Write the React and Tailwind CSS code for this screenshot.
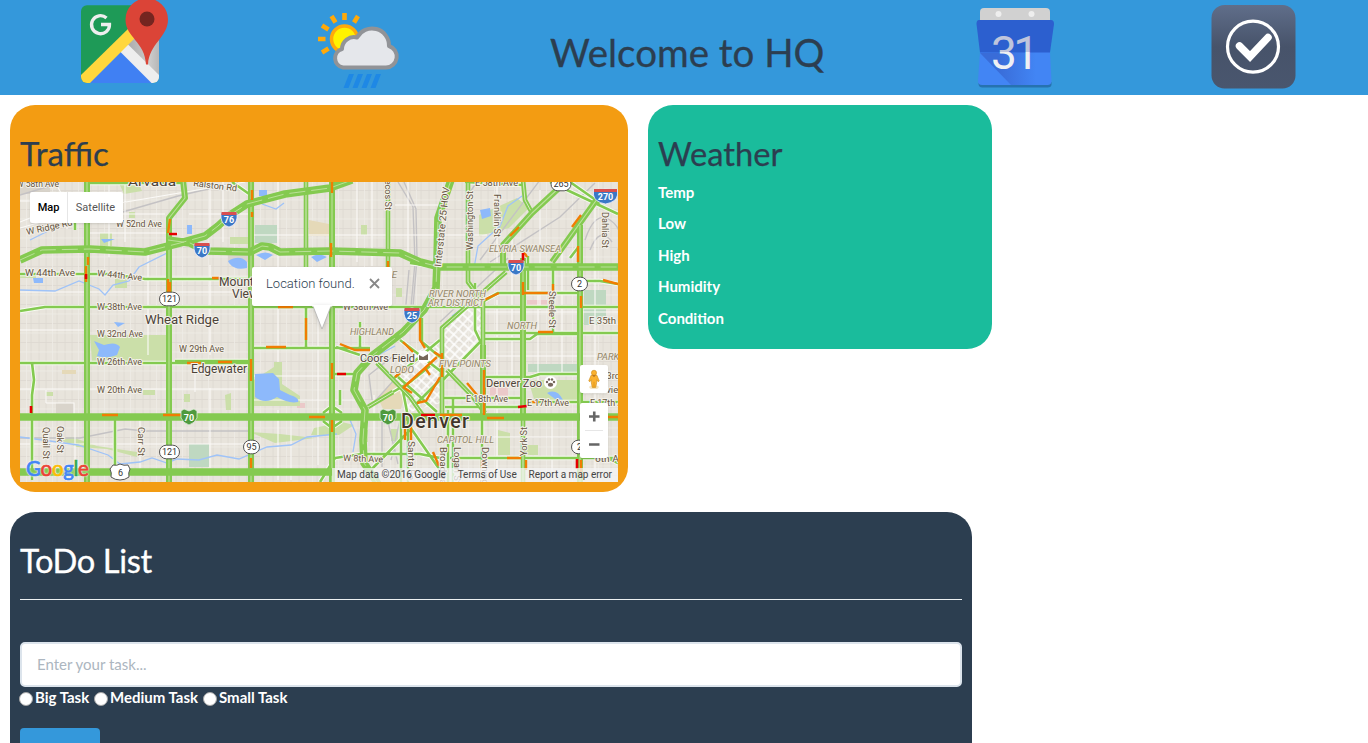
import React from "react";

const parks = [
  ["M118 181h20l4 10-18 3zM129 212h6v6h-6zM20 272h16v6h-16zM100 233h12v13h-12zM90 335h78v26H92zM252 381l22-14v-5h8v22l18 12v10h-46zM115 278h12v10h-12zM46 392h7v4h-7zM143 390h12v5h-12zM60 440l12-3 25 9 40 6v5l-30-8-30-2zM184 394h6v8h-6zM230 237h18v7h-18z"],
  ["M479 215l38-17 12 10-20 20-30 8zM528 380h53v20l-45 5zM498 430l12 3v22h-12zM361 225h6v10h-6zM396 288h6v9h-6zM225 395l6-2v17h-5zM360 430h8v12h-8zM314 428l28-6 12 3-15 10h-28zM250 432l30 2 35 4-40 5zM391 429h7v12h-7zM523 445h15v10h-15z"],
];
const greens = [
  "M255 225h22v18h-22zM189 444h20v23h-20zM528 364h49v8h-49zM584 290h22v28l-9 7h-13z",
];
const lakes = [
  "M228 261q12-7 19 1v6q-12 3-18-5zM256 255q10-5 17 0l-8 5zM311 257q8-5 16 0l-10 5zM255 374l18-1 6 6 1 11 10 5q10 3 8 7-9 2-21-5-12 8-22 0zM94 341l10 4q12-4 16 2l-3 8q-10 4-20 1l2-6zM547 393q10-5 16 7l-8-1zM101 239h14l-11 4zM259 190h8v6h-8zM114 322l11 1-7 4zM33 278h10v5h-9zM187 225h5v9h-5zM480 210l10-2 1 8-9 3z",
];
const streams =
  "M20 290l35 1 24-10 20 8 6 6 8-10 16-4 10-14 28-14M20 437l30 4 28 4 30 10 12 9 20-2 12-4 15 5 10-4 22 1 18-5 22 4 28-12 24-2 16-8 30-3M474 268l4-22 22-20 8-20 14-10M452 316l14-10 8-12M361 372l12-14 22-12M262 204l14 5 8-6M30 240l20-10M350 420l6 14-3 18";

const minor = [
  "M20 228L90 208 245 182M20 222l35-14M55 182l12 22v25M109 182v75M125 182v60M210 182v45M20 201h60M95 214h70M88 233h90M189 214h62M252 235h235M357 182v80M372 182v84M278 182v180M210 265v90M223 182v60M148 255v100M20 292h230M20 330h70M20 389h230M46 390v13M46 403h28v14M195 362v30M210 388v80M252 376h110M252 400h110M278 410v70M291 420v60M318 300v165M374 395v75M20 444h230M75 417v60M140 420v50M408 182v70M395 205h45M497 182v80M512 230v150M540 190v120M562 245v130M595 200v220M480 312h138M484 356h134M538 270v110M497 300v130M484 437h134M497 420v60M552 417v65M595 420v60",
];
const rails =
  "M398 182l15 25 2 55-4 45M404 182l12 27 1 50-4 48M409 270l-4 45M480 260l60-80M490 262l70-45 35-34M440 322l68-64M20 195l40-12M88 222l90-26 60-14M20 438h60l45-9 20 2h106M372 400l-3-25 28-22M376 400l18-20 25-20M585 240q10-30 25-20t8 30M590 250q10-25 22-8M470 200q0-18 14-17M382 422v45M388 422l10 42M400 420l-9 40";

const freeway = [
  "M20 260L42 250 90 249 145 252 180 243 205 236 218 226 230 215 247 204 285 194 330 188 352 180",
  "M168 240L190 243 206 251 250 252 262 246 270 247 280 252 330 251 400 253 420 262 440 267 618 267",
  "M451 180L438 218 437 262 436 288 424 310 403 332 373 355 357 373 354 390 365 410 363 440 364 463 378 484",
  "M20 417H618",
  "M20 472H335",
];
const arterial = [
  "M87 182V482", "M183 180L185 198 169 218V482", "M251 182V482", "M332 182V482",
  "M580 225V482", "M523 258V417", "M483 345V417",
  "M560 187L532 213 503 245V266", "M600 195L552 262",
];
const narrow = [
  "M306 182V270", "M388 182V268", "M523 417V482", "M483 300V345",
  "M523 180L525 200 532 213", "M506 272L442 328V415", "M468 183V282L483 302",
  "M377 363L410 397 424 417", "M447 370L473 397 485 413", "M368 407L393 392",
];
const streets = [
  "M20 274H110L145 279H252", "M20 311L45 307H332", "M332 307H618", "M20 363H252", "M175 361H250",
  "M252 348H370", "M32 363L34 380 32 395V480", "M115 420V475", "M306 348V308", "M410 258L438 267 410 263",
  "M482 333H618", "M482 339H530L537 334H580", "M486 377H530L540 374H580", "M443 398H520", "M445 407H520",
  "M527 402H618", "M450 458H618", "M443 380L482 340", "M410 427L440 470",
  "M453 398V482", "M448 410V482", "M482 420V482", "M553 267V335", "M482 302L498 293H580", "M528 256V290",
  "M400 340L443 373", "M398 377L437 412", "M393 379L440 340", "M416 404L442 378", "M402 386L408 417",
  "M393 392L410 382 430 366", "M356 374H332", "M336 347L360 355", "M360 322V350", "M422 318V342L440 357",
  "M401 420V482M408 418V482", "M320 482L335 458 362 454H420L440 458",
  "M580 281H600L618 284", "M580 445L618 463", "M550 182L618 214", "M570 182L600 203",
  "M183 183H88V190L75 213V230", "M465 182L523 185", "M232 182L252 196", "M340 390V405M323 413L332 406 342 413M323 421L332 428 342 421",
  "M475 283V330L482 345M570 258L580 245", "M410 430L370 471 378 477",
];
const slow =
  "M88 257v8M86 266v16M170 219l-2 14M168 279v16M170 282v10M252 190v10M252 212v5M332 181v12M331 243v14M388 261v8M306 318v22M266 347h20M251 359v22M332 363v16M332 420v12M251 458v10M309 417h16M102 415h16M163 415h20M187 363h14M218 362h14M212 278h10M278 307h15M523 282v13M524 293h28M484 300l15-7M519 227l-9 9M581 215l-9 12M578 246v16M581 296v12M603 280l15 4M553 284v10M340 344l15 6h15M403 342l10 10M420 318v22l5 8M395 377l12-10M403 387l9 6M417 403l9-2 14-24M403 388l34-31M425 368l5 7M434 352l8 5M442 353v24M467 383l10 12M484 370v45M440 415h22M487 418h17M538 332h15M507 458h14M482 460v18M433 452l6 14M405 418v22M411 418v22M526 460v10M581 460v18M527 402h12M595 417h23M527 257l-3-5";
const jam = "M169 234h8M86 274v5M31 406v7M337 374h9M523 253v8M421 415h14M518 407l9-1M577 459v10";

const labels = [
  ["W 58th Ave", 16, 187, 43, 9],
  ["Arvada", 128, 185.5, 48, 13, 0, "city"],
  ["Ralston Rd", 193, 186, 44, 9, 7],
  ["W Ridge Rd", 27, 235, 47, 9, -12],
  ["W 52nd Ave", 116, 227, 46, 9],
  ["W 44th Ave", 25, 276, 50, 9.5],
  ["W 44th Ave", 97, 276, 45, 9, 6],
  ["W 38th Ave", 97, 310, 45, 9],
  ["Wheat Ridge", 145, 323.5, 74, 12, 0, "city"],
  ["W 32nd Ave", 97, 337, 46, 9],
  ["W 29th Ave", 179, 352, 45, 9],
  ["W 26th Ave", 97, 365, 45, 9],
  ["W 20th Ave", 97, 393, 45, 9],
  ["Edgewater", 191, 372.5, 56, 12, 0, "city"],
  ["Mountain", 219, 285.5, 51, 12, 0, "city"],
  ["View", 232, 297.5, 26, 12, 0, "city"],
  ["Quail St", 43, 427, 32, 9, 90],
  ["Oak St", 57, 426, 27, 9, 90],
  ["Carr St", 138, 427, 29, 9, 90],
  ["W 38th Ave", 343, 310, 45, 9],
  ["W 8th Ave", 343, 461, 40, 9, 2],
  ["Pecos St", 385, 174, 36, 9, 90],
  ["Interstate 25 HOV", 441, 267, 80, 9.5, -84],
  ["Washington St", 473, 250, 59, 9, -90],
  ["Franklin St", 494, 194, 43, 9, 90],
  ["E 58th Ave", 475, 186, 43, 9],
  ["Dahlia St", 602, 212, 36, 9, 90],
  ["Steele St", 549, 291, 37, 9, 90],
  ["E 35th Ave", 589, 324, 45, 9],
  ["E 18th Ave", 466, 402, 42, 9],
  ["E 17th Ave", 527, 406, 42, 9],
  ["E 17th Ave", 590, 406, 42, 9],
  ["E 23rd Ave", 594, 379, 43, 9],
  ["Montview Blvd", 584, 393, 62, 9],
  ["6th Ave", 595, 462, 34, 9],
  ["York St", 527, 456, 29, 9, -90],
  ["Santa Fe", 408, 441, 39, 9, 90],
  ["Broadway", 440, 447, 42, 9, 90],
  ["Logan St", 454, 447, 37, 9, 90],
  ["Downing St", 482, 447, 49, 9, 90],
  ["SUNNYSIDE", 347, 278, 50, 9, 0, "area"],
  ["ELYRIA SWANSEA", 489, 252, 72, 9, 0, "area"],
  ["RIVER NORTH", 429, 297, 57, 9, 0, "area"],
  ["ART DISTRICT", 428, 306, 56, 9, 0, "area"],
  ["HIGHLAND", 350, 335, 44, 9, 0, "area"],
  ["NORTH", 507, 329, 30, 9, 0, "area"],
  ["PARK HILL", 597, 360, 43, 9, 0, "area"],
  ["FIVE POINTS", 439, 367, 52, 9, 0, "area"],
  ["LODO", 390, 373, 24, 9, 0, "area"],
  ["CAPITOL HILL", 437, 443, 57, 9, 0, "area"],
  ["Coors Field", 360, 361.5, 55, 10.5, 0, "poi"],
  ["Denver Zoo", 486, 386.5, 56, 10.5, 0, "poi"],
  ["Denver", 401, 428, 68, 19.5, 0, "capital"],
];

const labelTone = {
  road: "fill-[#65543e] stroke-[#f4f1ea]",
  city: "fill-[#4c4239] stroke-[#f4f1ea]",
  poi: "fill-[#51453a] stroke-[#f4f1ea]",
  area: "fill-[#948668] stroke-[#eeeae2] italic",
  capital: "fill-[#40352b] stroke-[#f4f1ea] font-medium",
};

function Label({ item }) {
  const [text, x, y, width, size, angle = 0, tone = "road"] = item;
  return (
    <text
      x={x}
      y={y}
      fontSize={size}
      textLength={width}
      lengthAdjust={tone === "capital" ? "spacing" : "spacingAndGlyphs"}
      transform={angle ? `rotate(${angle} ${x} ${y})` : undefined}
      strokeWidth="2"
      strokeLinejoin="round"
      paintOrder="stroke"
      className={labelTone[tone]}
    >
      {text}
    </text>
  );
}

function Interstate({ x, y, n, wide }) {
  const w = wide ? 12 : 8;
  return (
    <g transform={`translate(${x} ${y})`}>
      <path d={`M${-w} -6Q${-w / 2} -6 0 -7Q${w / 2} -6 ${w} -6V-1Q${w - 1} 6 0 8Q${1 - w} 6 ${-w} -1z`} fill="#3a78c6" stroke="#eef" strokeWidth=".8" />
      <path d={`M${-w + 0.5} -7H${w - 0.5}V-4H${-w + 0.5}z`} fill="#d94f4f" />
      <text y="4" textAnchor="middle" fontSize="9" fontWeight="700" fill="#fff">{n}</text>
    </g>
  );
}

function BusinessLoop({ x, y }) {
  return (
    <g transform={`translate(${x} ${y})`}>
      <path d="M-8 -6L-5 -8 0 -6 5 -8 8 -6V1Q6 6 0 8Q-6 6 -8 1z" fill="#4f9a3e" stroke="#dfeeda" strokeWidth=".8" />
      <text y="4" textAnchor="middle" fontSize="9" fontWeight="700" fill="#fff">70</text>
    </g>
  );
}

function StateRoute({ x, y, n }) {
  const w = n.length > 2 ? 10 : 8;
  return (
    <g transform={`translate(${x} ${y})`}>
      <rect x={-w} y="-6.8" width={w * 2} height="13.6" rx="6.8" fill="#fff" stroke="#555" />
      <text y="3.3" textAnchor="middle" fontSize="9" fill="#333">{n}</text>
    </g>
  );
}

function TrafficMap() {
  return (
    <svg viewBox="20 182 598 300" className="block h-[300px] w-[598px] font-[Roboto,sans-serif]" fill="none">
      <defs>
        <pattern id="blocks" width="26" height="19" patternUnits="userSpaceOnUse">
          <path d="M0 .5H26M5 0V19M13 0V19M20 0V19" stroke="#ddd8d0" strokeWidth=".8" />
          <path d="M0 10H26M.5 0V19" stroke="#efece6" strokeWidth=".8" />
        </pattern>
        <pattern id="downtown" width="7" height="7" patternUnits="userSpaceOnUse" patternTransform="rotate(42)">
          <path d="M0 1H7M1 0V7" stroke="#fff" strokeWidth="1.4" />
        </pattern>
      </defs>
      <rect x="20" y="182" width="598" height="300" fill="#e8e4dc" />
      <rect x="20" y="182" width="598" height="300" fill="url(#blocks)" />
      <path d="M309 220l20 4v12h-20zM378 398l15-18 12 14-4 15h-18zM62 370h14v4h-14z" fill="#e5d9b8" />
      <path d="M527 300h20v8h-20zM490 387h18v10h-18zM297 403h8v5h-8z" fill="#ebc9c9" />
      <path d="M56 403h18v10h-18zM20 182h30v12h-30zM228 252h24v10h-24z" fill="#d9d4cb" />
      <path d={parks.flat().join("")} fill="#cbdfa9" />
      <path d={greens.join("")} fill="#bfd8c1" />
      <path d="M440 330L484 290 484 340 440 385zM400 360L440 340 444 402 410 412 396 385z" fill="url(#downtown)" />
      <path d={rails} stroke="#c4c2c4" strokeWidth="1.4" />
      <path d={minor.join("")} stroke="#fbfaf7" strokeWidth="1.1" />
      <path d={streams} stroke="#9fc3f8" strokeWidth="1.3" />
      <path d={lakes.join("")} fill="#8db9fb" />
      <g strokeLinejoin="round">
        <path d={streets.join("")} stroke="#f7fbf1" strokeWidth="4.4" />
        <path d={streets.join("")} stroke="#84ca50" strokeWidth="2.6" />
        <path d={narrow.join("")} stroke="#84ca50" strokeWidth="4.6" />
        <path d={narrow.join("")} stroke="#d6ebc0" strokeWidth="1" />
        <path d={arterial.join("")} stroke="#84ca50" strokeWidth="6" />
        <path d={arterial.join("")} stroke="#bde09b" strokeWidth="1.1" />
        <path d={freeway.join("")} stroke="#84ca50" strokeWidth="7.6" />
        <path d={freeway.slice(0, 3).join("")} stroke="#c8e5a9" strokeWidth=".8" strokeDasharray="16 6" />
      </g>
      <path d={slow} stroke="#f07d02" strokeWidth="2.4" />
      <path d={jam} stroke="#e60000" strokeWidth="2.6" />
      {labels.map((item, i) => <Label key={i} item={item} />)}
      <Interstate x={202} y={250} n="70" />
      <Interstate x={229} y={219} n="76" />
      <Interstate x={516} y={267} n="70" />
      <Interstate x={412} y={315} n="25" />
      <Interstate x={605.5} y={196} n="270" wide />
      <BusinessLoop x={189} y={417} />
      <BusinessLoop x={388} y={417} />
      <StateRoute x={169.5} y={299} n="121" />
      <StateRoute x={169.5} y={452} n="121" />
      <StateRoute x={251.5} y={447} n="95" />
      <StateRoute x={579.5} y={284} n="2" />
      <StateRoute x={579.5} y={447} n="2" />
      <StateRoute x={561} y={184} n="265" />
      <path d="M113 465q4 1 7-1 4 2 8 1l2 4q-2 4-1 8-4 3-9 3-5 0-9-3 1-4-1-8z" fill="#fff" stroke="#555" />
      <text x="120.5" y="476" textAnchor="middle" fontSize="9" fill="#333">6</text>
      <circle cx="424" cy="357" r="6.5" fill="#fff" />
      <path d="M419 355l4 2 5-3v6h-9z" fill="#77685c" />
      <circle cx="550.5" cy="382.5" r="6.5" fill="#fff" />
      <g fill="#77685c">
        <circle cx="547" cy="382" r="1.2" /><circle cx="549" cy="379.5" r="1.2" />
        <circle cx="552" cy="379.5" r="1.2" /><circle cx="554" cy="382" r="1.2" />
        <ellipse cx="550.5" cy="384.7" rx="2.7" ry="2" />
      </g>
    </svg>
  );
}

function MapControls() {
  return (
    <>
      <div className="absolute left-[10px] top-[10px] flex h-[31px] w-[93px] rounded-[2px] bg-white text-[11px] leading-[31px] shadow-sm">
        <span className="w-[38px] border-r border-[#e6e6e6] text-center font-medium text-black">Map</span>
        <span className="flex-1 text-center text-[#565656]">Satellite</span>
      </div>
      <div className="absolute left-[232px] top-[85px] flex h-[39px] w-[140px] items-center justify-between rounded-[2px] bg-white pb-[6px] pl-[14px] pr-[12px] shadow">
        <span className="text-[13px] font-light text-[#2c3e50]">Location found.</span>
        <svg viewBox="0 0 12 12" className="h-3 w-3"><path d="M2 1L11 10M11 1L2 10" stroke="#888" strokeWidth="1.8" /></svg>
      </div>
      <svg viewBox="0 0 20 25" className="absolute left-[292px] top-[123px] h-[25px] w-5 drop-shadow-sm">
        <path d="M1 1L10 24 19 1" fill="#fff" stroke="#aaa" strokeWidth=".7" /><path d="M0 0H20V1.5H0z" fill="#fff" />
      </svg>
      <div className="absolute left-[560px] top-[183px] flex h-7 w-7 items-center justify-center rounded-[2px] bg-white shadow-sm">
        <svg viewBox="0 0 14 22" className="h-[21px] w-[14px]">
          <ellipse cx="7" cy="19" rx="5" ry="2" fill="#f4e4bd" />
          <path d="M4 6.500h6l2.500 6-1.200.8-1.500-2v3l-1 5H5.200l-1-5v-3l-1.500 2-1.200-.8z" fill="#fbb12f" stroke="#c98514" strokeWidth=".6" />
          <circle cx="7" cy="4" r="2.700" fill="#fbb12f" stroke="#c98514" strokeWidth=".6" />
          <path d="M5 6.500l2 2 2-2z" fill="#b46d1b" /><path d="M7 13.500V19" stroke="#c98514" strokeWidth=".6" />
        </svg>
      </div>
      <div className="absolute left-[560px] top-[221px] flex h-[55px] w-7 flex-col items-center rounded-[2px] bg-white shadow-sm">
        <svg viewBox="0 0 28 55" className="h-[55px] w-7"><path d="M9 13.5H19.500M14.250 8.500V18.500M9 41.5H19.500" stroke="#666" strokeWidth="2.6" /><path d="M5 27.5H23" stroke="#e6e6e6" /></svg>
      </div>
      <div className="absolute bottom-0 right-0 flex h-[14px] w-[286px] items-center justify-between bg-[#f5f5f5]/75 pl-[5px] pr-[6px] text-[10px] leading-[14px] text-[#444]">
        <span>Map data ©2016 Google</span><span>Terms of Use</span><span>Report a map error</span>
      </div>
      <div className="absolute bottom-[2px] left-[6px] whitespace-nowrap font-[Lato,sans-serif] text-[20.5px] leading-[24px] tracking-[-0.3px] [-webkit-text-stroke:0.7px_currentColor] [text-shadow:0_0_2px_#fff,0_0_2px_#fff]">
        <span className="text-[#4285f4]">G</span><span className="text-[#ea4335]">o</span><span className="text-[#fbbc05]">o</span><span className="text-[#4285f4]">g</span><span className="text-[#34a853]">l</span><span className="text-[#ea4335]">e</span>
      </div>
    </>
  );
}

function MapsLogo() {
  return (
    <svg viewBox="80 0 90 86" className="h-[86px] w-[90px]">
      <defs>
        <clipPath id="tile"><rect x="81" y="5.3" width="78" height="77.7" rx="6" /></clipPath>
        <linearGradient id="fold" x1="0" x2="1"><stop stopColor="#a7a7a7" /><stop offset=".7" stopColor="#ccc" /><stop offset="1" stopColor="#b5b5b5" /></linearGradient>
      </defs>
      <g clipPath="url(#tile)">
        <path d="M81 5h79v79H81z" fill="#1e9a57" />
        <path d="M125 45l16-16 19 10v45z" fill="url(#fold)" />
        <path d="M120 50L84 86h72z" fill="#4080f3" />
        <path d="M160 76L127 43.5 119.5 51 153 84.5h7z" fill="#eee" />
        <path d="M77 79L131 26 139 34 86 87z" fill="#ffd73d" />
      </g>
      <path d="M146 64.5c-1-23-20.500-27-20.500-45A21 21 0 0 1 168 19.500C168 37 149 44 148 64.500z" fill="#db4437" />
      <circle cx="147" cy="19" r="7.500" fill="#742520" />
      <path d="M106.500 18A9 9 0 1 0 109.500 24.500H101" fill="none" stroke="#eee" strokeWidth="3.300" />
    </svg>
  );
}

function WeatherLogo() {
  return (
    <svg viewBox="316 10 84 80" className="h-[80px] w-[84px]">
      <g stroke="#ffa90a" strokeWidth="4.600">
        <path d="M344.500 13v7M331.500 16l4 6.500M358 16l-4 6.500M322 25.500l6.500 4M318 39h7.500M322 52.500l6.500-4" />
      </g>
      <circle cx="344.500" cy="39" r="13" fill="#fff200" stroke="#ffa90a" strokeWidth="3.500" />
      <path d="M343 67.500a9.500 9.500 0 0 1-1-18.500 12 12 0 0 1 15-11.500 17 17 0 0 1 32 8.500 11 11 0 0 1-3 21.500z" fill="#e5e7eb" stroke="#919397" strokeWidth="4" strokeLinejoin="round" />
      <path d="M349 74h5l-5.500 14h-5zM358 74h5l-5.500 14h-5zM367 74h5l-5.500 14h-5zM376 74h5l-5.500 14h-5z" fill="#1e88e5" />
    </svg>
  );
}

function CalendarLogo() {
  return (
    <svg viewBox="975 6 80 84" className="h-[84px] w-[80px]">
      <path d="M978.500 83l73-1v2.500q0 3-4 3h-65q-4 0-4-4z" fill="#2672b0" />
      <path d="M980 21v-9q0-4 4-4h62q4 0 4 4v9z" fill="#d1d1d1" />
      <circle cx="998.500" cy="14" r="3" fill="#eee" /><circle cx="1031.500" cy="14" r="3" fill="#eee" />
      <path d="M980 52h70l1.500 29q0 4-4 4h-65.500q-4 0-4-4z" fill="#4285f4" />
      <path d="M980 53l31 32h30l9-33z" fill="url(#shade)" />
      <path d="M979 20h72q3 0 3 4l-4 28.500h-70L976.500 24q0-4 2.500-4z" fill="#2c5fcf" />
      <g className="font-[Roboto,sans-serif]" fontSize="46" fontWeight="400">
        <text x="991" y="69" textLength="48" fill="url(#dateTone)">31</text>
      </g>
      <defs>
        <linearGradient id="shade"><stop offset=".25" stopColor="#396cd8" /><stop offset=".8" stopColor="#4285f4" /></linearGradient>
        <linearGradient id="dateTone" gradientUnits="userSpaceOnUse" x1="0" y1="6" x2="0" y2="90"><stop offset=".55" stopColor="#bfc5dc" /><stop offset=".55" stopColor="#eef0f3" /></linearGradient>
      </defs>
    </svg>
  );
}

function TaskLogo() {
  return (
    <svg viewBox="1210 4 87 86" className="h-[86px] w-[87px]">
      <defs><linearGradient id="slate" x1="0" x2="0" y1="0" y2="1"><stop stopColor="#606e8a" /><stop offset=".5" stopColor="#47536a" /><stop offset="1" stopColor="#49566e" /></linearGradient></defs>
      <rect x="1211.500" y="5" width="84" height="83.500" rx="13" fill="url(#slate)" />
      <circle cx="1253" cy="46.700" r="25.500" fill="none" stroke="#fff" strokeWidth="3.200" />
      <path d="M1239.500 46l10.500 10.500 18-19" fill="none" stroke="#fff" strokeWidth="7.500" strokeLinecap="round" />
    </svg>
  );
}

function Header() {
  return (
    <header className="flex h-[95px] items-start bg-[#3498db] pl-[80px]">
      <MapsLogo />
      <div className="ml-[146px] mt-[10px]"><WeatherLogo /></div>
      <h1 className="ml-[150px] w-[275px] whitespace-nowrap pt-[28px] text-[38.5px] leading-[48px] [-webkit-text-stroke:0.3px_currentColor]">Welcome to HQ</h1>
      <div className="ml-[150px] mt-[6px]"><CalendarLogo /></div>
      <div className="ml-[155px] mt-[4px]"><TaskLogo /></div>
    </header>
  );
}

export default function App() {
  return (
    <div className="h-[743px] overflow-hidden bg-white font-[Lato,sans-serif] text-[#2c3e50]">
      <Header />
      <div className="flex items-start gap-5 px-[10px] pt-[10px]">
        <section className="h-[387px] w-[618px] rounded-[25px] bg-[#f39c12] px-[10px] pt-[29px]">
          <h2 className="h-[48px] text-[33px] leading-[39px] [-webkit-text-stroke:0.25px_currentColor]">Traffic</h2>
          <div className="relative h-[300px] overflow-hidden font-[Roboto,sans-serif]">
            <TrafficMap />
            <MapControls />
          </div>
        </section>
        <section className="h-[244px] w-[344px] rounded-[25px] bg-[#1abc9c] px-[10px] pt-[29px]">
          <h2 className="h-[43px] text-[32.7px] leading-[39px] [-webkit-text-stroke:0.25px_currentColor]">Weather</h2>
          <ul className="text-[15px] font-bold leading-[31.4px] text-white">
            {["Temp", "Low", "High", "Humidity", "Condition"].map((name) => <li key={name}>{name}</li>)}
          </ul>
        </section>
      </div>
      <section className="ml-[10px] mt-5 h-[260px] w-[962px] rounded-t-[25px] bg-[#2c3e50] px-[10px] pt-[29px] text-white">
        <h2 className="h-[58px] text-[32.7px] leading-[39px] tracking-[-0.4px] [-webkit-text-stroke:0.3px_currentColor]">ToDo List</h2>
        <hr className="border-[#ecf0f1]" />
        <input className="mt-[42px] block h-[45px] w-full rounded-[5px] border-2 border-[#dce4ec] bg-white px-[15px] pb-[2px] text-[15px] placeholder-[#acb6c0]" placeholder="Enter your task..." />
        <div className="flex h-[21px] items-center text-[15px] font-bold leading-[21px]">
          {[["Big Task", "w-[75px]"], ["Medium Task", "w-[109px]"], ["Small Task", "w-[90px]"]].map(([name, width]) => (
            <label key={name} className={`flex items-center whitespace-nowrap ${width}`}>
              <input type="radio" name="size" className="ml-[-1px] mr-[2px] mt-[3px] h-[14px] w-[14px] shrink-0 appearance-none rounded-full border border-[#a5a5a5] bg-white" />
              {name}
            </label>
          ))}
        </div>
        <button className="mt-[20px] block h-[45px] w-20 rounded-[4px] bg-[#3498db]" aria-label="Add task" />
      </section>
    </div>
  );
}
